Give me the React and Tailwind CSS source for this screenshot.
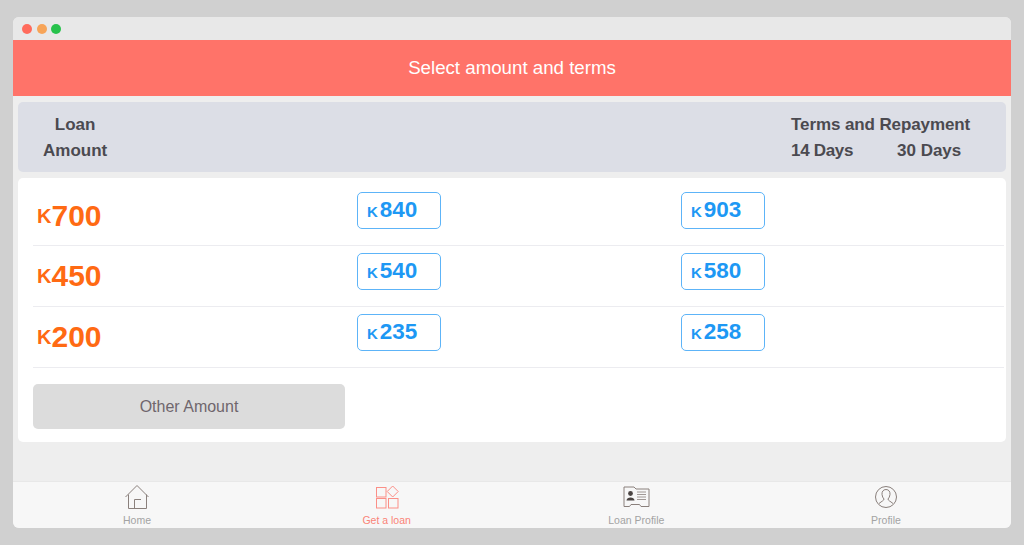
const rows = [
  { amount: '700', short: '840', long: '903' },
  { amount: '450', short: '540', long: '580' },
  { amount: '200', short: '235', long: '258' },
];

function HomeIcon() {
  return (
    <svg width="26" height="26" viewBox="0 0 26 26" fill="none" stroke="#8a807c" strokeWidth="1">
      <path d="M1.5 13 L13 1.5 L24.5 13" />
      <path d="M4.5 10.5 V24.5 H22.5 V10.5" />
      <path d="M10.5 24.5 V15.5 H17" />
    </svg>
  );
}

function LoanIcon() {
  return (
    <svg width="24" height="24" viewBox="0 0 24 24" fill="none" stroke="#fb8f87" strokeWidth="1">
      <rect x="1.5" y="2.5" width="9.5" height="9.5" />
      <path d="M17.7 1 L23.2 6.5 L17.7 12 L12.2 6.5 Z" />
      <rect x="1.5" y="13.5" width="9.5" height="9.5" />
      <rect x="13.5" y="13.5" width="9.5" height="9.5" />
    </svg>
  );
}

function CardIcon() {
  return (
    <svg width="27" height="22" viewBox="0 0 27 22" fill="none" stroke="#8a807c" strokeWidth="1">
      <path d="M1 1 H11 L13 3 H26 V20.5 H18 L16.5 18.5 H8 L6.5 20.5 H1 Z" />
      <circle cx="7.5" cy="7.5" r="2.4" fill="#4a4442" stroke="none" />
      <path d="M3.5 14.5 C3.5 10.5 11.5 10.5 11.5 14.5 Z" fill="#4a4442" stroke="none" />
      <path d="M14 6 H23 M14 8.5 H23 M14 11 H23 M14 13.5 H23" strokeWidth="0.8" />
    </svg>
  );
}

function ProfileIcon() {
  return (
    <svg width="24" height="24" viewBox="0 0 24 24" fill="none" stroke="#8a807c" strokeWidth="1">
      <circle cx="12" cy="12" r="10.5" />
      <path d="M12 4.5 C9 4.5 7.8 6.8 8 9.5 C8.2 11.5 9 13 10 14 C10 15.5 8 16 5 18.5" />
      <path d="M12 4.5 C15 4.5 16.2 6.8 16 9.5 C15.8 11.5 15 13 14 14 C14 15.5 16 16 19 18.5" />
    </svg>
  );
}

function TermButton({ value }) {
  return (
    <div className="flex h-[37px] w-[84px] items-center rounded-[5px] border border-[#5db4f8] pl-[9px] text-[#1d98f4]">
      <span className="mr-[2px] mt-[2px] text-[15px] leading-none font-bold">K</span>
      <span className="text-[22.5px] leading-none font-bold">{value}</span>
    </div>
  );
}

function NavItem({ icon, label, active }) {
  return (
    <div className="flex w-[120px] flex-col items-center">
      <div className="flex h-[28px] items-center justify-center">{icon}</div>
      <span className={`mt-[2px] text-[10.5px] leading-[14px] ${active ? 'text-[#fa8478]' : 'text-[#a3a3a3]'}`}>
        {label}
      </span>
    </div>
  );
}

function App() {
  return (
    <div className="h-[545px] w-[1024px] bg-[#d0d0d0] pt-[17px] pl-[13px] font-['Liberation_Sans',Arial,sans-serif]">
      <div className="flex h-[511px] w-[998px] flex-col overflow-hidden rounded-[6px] bg-[#eeeeee]">
        {/* Window bar */}
        <div className="flex h-[23px] items-center gap-[4.7px] bg-[#e8e8e8] pl-[9px]">
          <span className="h-[10px] w-[10px] rounded-full bg-[#ff6b5c]" />
          <span className="h-[10px] w-[10px] rounded-full bg-[#f7a458]" />
          <span className="h-[10px] w-[10px] rounded-full bg-[#27c24c]" />
        </div>

        {/* Title */}
        <div className="flex h-[56px] items-center justify-center bg-[#ff7369] text-[18.7px] text-white">
          Select amount and terms
        </div>

        {/* Column headings */}
        <div className="mx-[5px] mt-[6px] flex h-[70px] justify-between rounded-[5px] bg-[#dcdee6] pt-[10px] text-[17px] leading-[26px] font-bold text-[#4b4a50]">
          <div className="ml-[25px] text-center">
            <div>Loan</div>
            <div>Amount</div>
          </div>
          <div className="mr-[36px] w-[179px]">
            <div className="whitespace-nowrap tracking-[-0.1px]">Terms and Repayment</div>
            <div className="flex">
              <span className="w-[106px] tracking-[-0.3px]">14 Days</span>
              <span>30 Days</span>
            </div>
          </div>
        </div>

        {/* Amount table */}
        <div className="mx-[5px] mt-[6px] h-[264px] rounded-[5px] bg-white pt-[3px] pr-[2px] pl-[15px]">
          {rows.map((row, index) => (
            <div key={row.amount} className="flex h-[61px] items-start border-b border-[#ececf0] pt-[7px] first:h-[65px] first:pt-[11px]">
              <div className={`flex w-[324px] items-center pl-[4px] text-[#ff6a13] ${index === 0 ? 'pt-[6px]' : 'pt-[5px]'}`}>
                <span className="text-[20px] leading-none font-bold">K</span>
                <span className="text-[30px] leading-[36px] font-bold">{row.amount}</span>
              </div>
              <div className="w-[324px]">
                <TermButton value={row.short} />
              </div>
              <TermButton value={row.long} />
            </div>
          ))}
          <button className="mt-[16px] h-[45px] w-[312px] rounded-[5px] bg-[#dcdcdc] text-[16px] text-[#6f666c]">
            Other Amount
          </button>
        </div>

        {/* Bottom navigation */}
        <div className="mt-auto flex h-[47px] justify-between border-t border-[#e8e8e8] bg-[#f7f7f7] pt-[1px] pr-[65px] pl-[64px]">
          <NavItem icon={<HomeIcon />} label="Home" />
          <NavItem icon={<LoanIcon />} label="Get a loan" active />
          <NavItem icon={<CardIcon />} label="Loan Profile" />
          <NavItem icon={<ProfileIcon />} label="Profile" />
        </div>
      </div>
    </div>
  );
}

export default App;
